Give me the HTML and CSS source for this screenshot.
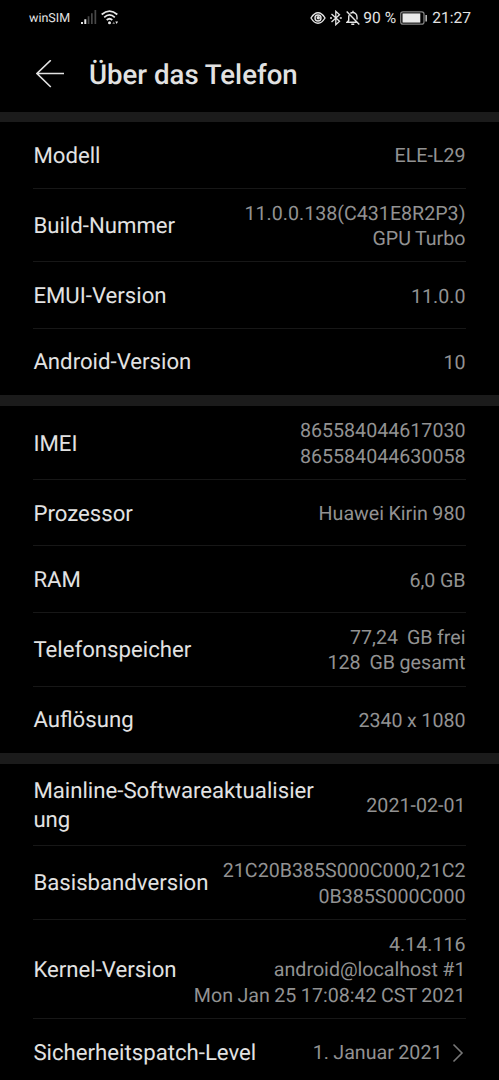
FILE: index.html
```html
<!DOCTYPE html>
<html lang="de">
<head>
<meta charset="utf-8">
<title>Über das Telefon</title>
<link rel="stylesheet" href="styles.css">
</head>
<body>
<div class="status">
  <span class="carrier">winSIM</span>
  <svg class="signal" width="16" height="15" viewBox="0 0 16 15"><path fill="#e4e4e4" d="M0 12h2v2H0zM3.3 9.2h2V14h-2z"/><path fill="#484848" d="M6.7 6.2h1.7V14H6.700zM10 3.200h1.700V14H10zM13.500 0h1.700v14h-1.700z"/></svg>
  <svg class="wifi" width="18" height="15" viewBox="0 0 18 15" fill="none" stroke="#e8e8e8" stroke-width="1.700"><path d="M.7 4.500Q8.500-2.300 16.300 4.500M3.200 7.300q5.300-4.700 10.600 0M5.700 10q2.800-2.500 5.600 0"/><circle cx="8.500" cy="12.700" r="1.500" fill="#e8e8e8" stroke="none"/><path stroke="none" fill="#777" d="M11.300 14l1.400-2.500 1.400 2.500z"/><path stroke="none" fill="#eee" d="M14.300 11.500h2.700L15.650 14z"/></svg>
  <div class="right">
    <svg width="16" height="14" viewBox="0 0 16 14" fill="none" stroke="#e4e4e4" stroke-width="1.400"><path d="M1 7Q4.200 1.800 8 1.800T15 7Q11.800 12.200 8 12.200T1 7z"/><circle cx="8" cy="7" r="3"/><circle cx="8.300" cy="6.700" r="1.700" fill="#e4e4e4" stroke="none"/></svg>
    <svg class="bt" width="12" height="16" viewBox="0 0 12 16" fill="none" stroke="#e4e4e4" stroke-width="1.300"><path d="M1.500 4l8 7.300L5.800 14.700V1.300L9.500 4.700l-8 7.300"/><path d="M0 8h2M9.800 8h2"/></svg>
    <svg class="bell" width="14" height="16" viewBox="0 0 14 16" fill="none" stroke="#e4e4e4" stroke-width="1.400"><path d="M4.400 3.300Q7 1.500 9.500 3.500 11 4.800 11 7.200v2.200M3 5.200q-.3 1-.3 3v2.300L1 12.300h9.500M5.300 14.300h3M7 .8v1.500M.7 1.500l12.600 13"/></svg>
    <span class="percent">90 %</span>
    <svg class="battery" width="28" height="14" viewBox="0 0 28 14"><rect x=".7" y=".9" width="23.300" height="12.200" rx="2.200" fill="none" stroke="#858585" stroke-width="1.200"/><path fill="#e9e9e9" d="M2.500 2.400h17.800v9.200H2.500z"/><path fill="#ddd" d="M25.500 4h1.300v6.500h-1.300z"/></svg>
    <span class="time">21:27</span>
  </div>
</div>
<header class="header">
  <svg width="28" height="28" viewBox="0 0 28 28" fill="none" stroke="#e2e2e2" stroke-width="1.600"><path d="M14.800 .2L1 13.500l13.800 13.500M1 13.500h27"/></svg>
  <h1>Über das Telefon</h1>
</header>
<main>
<section class="group">
  <div class="row"><div class="label">Modell</div><div class="value">ELE-L29</div></div>
  <div class="row two"><div class="label">Build-Nummer</div><div class="value">11.0.0.138(C431E8R2P3)<br>GPU Turbo</div></div>
  <div class="row"><div class="label">EMUI-Version</div><div class="value">11.0.0</div></div>
  <div class="row"><div class="label">Android-Version</div><div class="value">10</div></div>
</section>
<section class="group">
  <div class="row two"><div class="label">IMEI</div><div class="value">865584044617030<br>865584044630058</div></div>
  <div class="row"><div class="label">Prozessor</div><div class="value">Huawei Kirin 980</div></div>
  <div class="row"><div class="label">RAM</div><div class="value">6,0 GB</div></div>
  <div class="row two"><div class="label">Telefonspeicher</div><div class="value">77,24&nbsp; GB frei<br>128&nbsp; GB gesamt</div></div>
  <div class="row"><div class="label">Auflösung</div><div class="value">2340 x 1080</div></div>
</section>
<section class="group">
  <div class="row wrapped"><div class="label">Mainline-Softwareaktualisier<br>ung</div><div class="value">2021-02-01</div></div>
  <div class="row two"><div class="label">Basisbandversion</div><div class="value">21C20B385S000C000,21C2<br>0B385S000C000</div></div>
  <div class="row three"><div class="label">Kernel-Version</div><div class="value">4.14.116<br>android@localhost #1<br>Mon Jan 25 17:08:42 CST 2021</div></div>
  <div class="row"><div class="label">Sicherheitspatch-Level</div><div class="value link">1. Januar 2021<svg width="14" height="20" viewBox="0 0 14 20" fill="none" stroke="#777" stroke-width="1.600"><path d="M1.500 1.500L10 10l-8.500 8.500"/></svg></div></div>
</section>
</main>
</body>
</html>
```
FILE: styles.css
```css
* { box-sizing: border-box; }
body {
  margin: 0;
  height: 1080px;
  overflow: hidden;
  background: #000;
  color: #e2e2e2;
  font-family: Roboto, sans-serif;
  text-rendering: geometricPrecision;
}
svg { display: block; flex: none; }
.status {
  display: flex;
  align-items: center;
  height: 35px;
  padding: 0 28px 0 29px;
  white-space: nowrap;
}
.carrier { width: 52px; padding-top: 1px; font-size: 12.5px; }
.wifi { margin-left: 4px; }
.right {
  display: flex;
  align-items: center;
  margin-left: auto;
  font-size: 15.600px;
}
.bt { margin-left: 4px; }
.bell { margin-left: 4px; }
.percent { margin-left: 3px; }
.battery { margin-left: 4px; }
.time { margin-left: 4px; }
.header {
  display: flex;
  align-items: center;
  gap: 25px;
  height: 77px;
  padding-left: 36px;
}
h1 {
  margin: 0;
  padding-top: 2px;
  font-size: 27.600px;
  line-height: 32px;
  font-weight: 500;
}
.group {
  border-top: 10px solid #1b1b1b;
  padding: 0 33px;
}
.group + .group { border-top-width: 11px; }
.row {
  display: flex;
  align-items: center;
  justify-content: space-between;
  height: 66.500px;
  border-bottom: 1px solid #171717;
  white-space: nowrap;
}
.row:last-child { border-bottom-color: transparent; }
.two { height: 73.700px; }
.wrapped { height: 82px; }
.three { height: 99px; }
.label {
  padding: 3px 0 0 0.400px;
  font-size: 22.200px;
  line-height: 29px;
}
.value {
  padding: 2.500px 0.500px 0 0;
  color: #929292;
  font-size: 19.650px;
  line-height: 25.300px;
  word-spacing: -0.400px;
  text-align: right;
}
.link { display: flex; align-items: center; gap: 9px; }
```
